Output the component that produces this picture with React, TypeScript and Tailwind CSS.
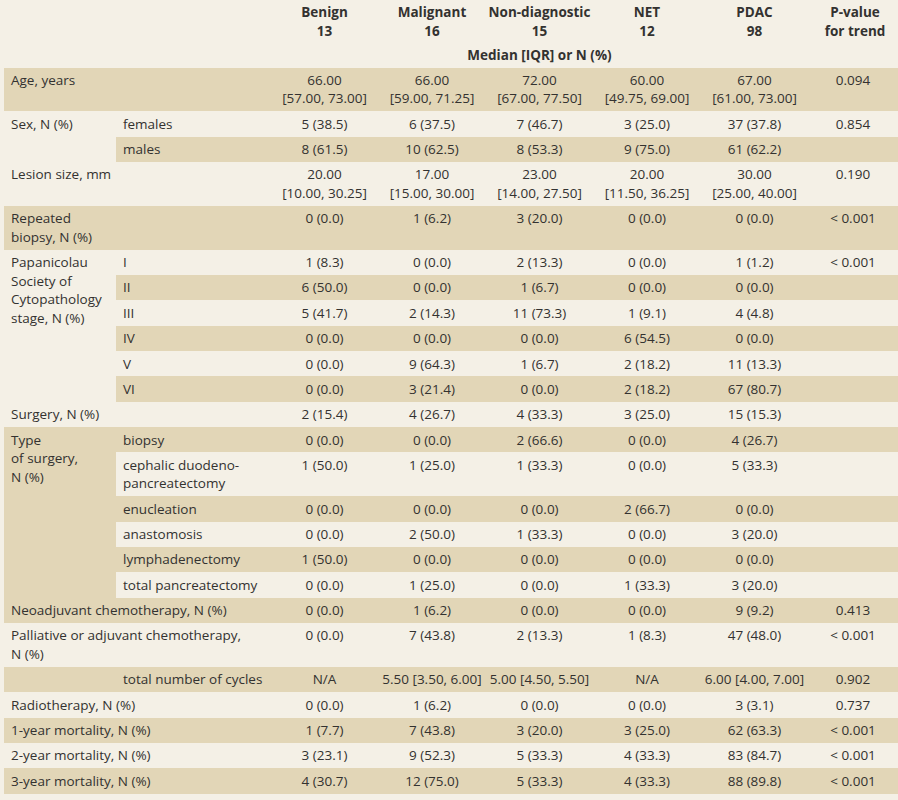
import type { ReactNode } from 'react';

const DARK = 'bg-[#e2d6b7]';
const LIGHT = 'bg-[#f4f0e6]';

type RowProps = {
  dark?: boolean;
  label?: ReactNode;
  rowSpan?: number;
  wide?: boolean;
  sub?: string;
  vals: string[];
  p?: string;
};

const Row = ({ dark, label, rowSpan, wide, sub, vals, p }: RowProps) => {
  const bg = dark ? DARK : LIGHT;
  return (
    <tr>
      {label !== undefined && (
        <td
          rowSpan={rowSpan}
          colSpan={wide ? 2 : 1}
          className={`${bg} pl-[7px] pr-1 text-left align-top whitespace-pre-line`}
        >
          {label}
        </td>
      )}
      {sub !== undefined && (
        <td className={`${bg} pl-[7px] text-left align-top whitespace-pre-line`}>{sub}</td>
      )}
      {vals.map((v, i) => (
        <td key={i} className={`${bg} text-center align-top whitespace-pre-line`}>
          {v}
        </td>
      ))}
      <td className={`${bg} text-center align-top`}>{p ?? ''}</td>
    </tr>
  );
};

const z = '0 (0.0)';

export default function App() {
  return (
    <div className="min-h-screen bg-[#f4f0e6] text-[#333230]" style={{ fontFamily: '"Open Sans", "Noto Sans", sans-serif' }}>
      <table className="ml-[4px] w-[894px] table-fixed border-collapse text-[13.5px] leading-[18.5px] [&_td]:py-[3.43px]">
        <colgroup>
          <col className="w-[112px]" />
          <col className="w-[155px]" />
          <col className="w-[107px]" />
          <col className="w-[108px]" />
          <col className="w-[107px]" />
          <col className="w-[108px]" />
          <col className="w-[107px]" />
          <col className="w-[90px]" />
        </colgroup>
        <thead className="font-bold">
          <tr>
            <th colSpan={2} />
            <th className="pt-[3px] pb-[2px] text-center align-top">Benign<br />13</th>
            <th className="pt-[3px] pb-[2px] text-center align-top">Malignant<br />16</th>
            <th className="pt-[3px] pb-[2px] text-center align-top">Non-diagnostic<br />15</th>
            <th className="pt-[3px] pb-[2px] text-center align-top">NET<br />12</th>
            <th className="pt-[3px] pb-[2px] text-center align-top">PDAC<br />98</th>
            <th className="pt-[3px] pb-[2px] pl-[4px] text-center align-top">P-value<br />for trend</th>
          </tr>
          <tr>
            <th colSpan={2} />
            <th colSpan={5} className="pt-[3.5px] pb-[3.5px] text-center">Median [IQR] or N (%)</th>
            <th />
          </tr>
        </thead>
        <tbody>
          <Row dark wide label="Age, years" vals={['66.00\n[57.00, 73.00]', '66.00\n[59.00, 71.25]', '72.00\n[67.00, 77.50]', '60.00\n[49.75, 69.00]', '67.00\n[61.00, 73.00]']} p="0.094" />
          <Row label="Sex, N (%)" rowSpan={2} sub="females" vals={['5 (38.5)', '6 (37.5)', '7 (46.7)', '3 (25.0)', '37 (37.8)']} p="0.854" />
          <Row dark sub="males" vals={['8 (61.5)', '10 (62.5)', '8 (53.3)', '9 (75.0)', '61 (62.2)']} />
          <Row wide label="Lesion size, mm" vals={['20.00\n[10.00, 30.25]', '17.00\n[15.00, 30.00]', '23.00\n[14.00, 27.50]', '20.00\n[11.50, 36.25]', '30.00\n[25.00, 40.00]']} p="0.190" />
          <Row dark label={'Repeated\nbiopsy, N (%)'} sub="" vals={[z, '1 (6.2)', '3 (20.0)', z, z]} p="< 0.001" />
          <Row label={'Papanicolau\nSociety of\nCytopathology\nstage, N (%)'} rowSpan={6} sub="I" vals={['1 (8.3)', z, '2 (13.3)', z, '1 (1.2)']} p="< 0.001" />
          <Row dark sub="II" vals={['6 (50.0)', z, '1 (6.7)', z, z]} />
          <Row sub="III" vals={['5 (41.7)', '2 (14.3)', '11 (73.3)', '1 (9.1)', '4 (4.8)']} />
          <Row dark sub="IV" vals={[z, z, z, '6 (54.5)', z]} />
          <Row sub="V" vals={[z, '9 (64.3)', '1 (6.7)', '2 (18.2)', '11 (13.3)']} />
          <Row dark sub="VI" vals={[z, '3 (21.4)', z, '2 (18.2)', '67 (80.7)']} />
          <Row wide label="Surgery, N (%)" vals={['2 (15.4)', '4 (26.7)', '4 (33.3)', '3 (25.0)', '15 (15.3)']} />
          <Row dark label={'Type\nof surgery,\nN (%)'} rowSpan={6} sub="biopsy" vals={[z, z, '2 (66.6)', z, '4 (26.7)']} />
          <Row sub={'cephalic duodeno-\npancreatectomy'} vals={['1 (50.0)', '1 (25.0)', '1 (33.3)', z, '5 (33.3)']} />
          <Row dark sub="enucleation" vals={[z, z, z, '2 (66.7)', z]} />
          <Row sub="anastomosis" vals={[z, '2 (50.0)', '1 (33.3)', z, '3 (20.0)']} />
          <Row dark sub="lymphadenectomy" vals={['1 (50.0)', z, z, z, z]} />
          <Row sub="total pancreatectomy" vals={[z, '1 (25.0)', z, '1 (33.3)', '3 (20.0)']} />
          <Row dark wide label="Neoadjuvant chemotherapy, N (%)" vals={[z, '1 (6.2)', z, z, '9 (9.2)']} p="0.413" />
          <Row wide label={'Palliative or adjuvant chemotherapy,\nN (%)'} vals={[z, '7 (43.8)', '2 (13.3)', '1 (8.3)', '47 (48.0)']} p="< 0.001" />
          <Row dark label="" sub="total number of cycles" vals={['N/A', '5.50 [3.50, 6.00]', '5.00 [4.50, 5.50]', 'N/A', '6.00 [4.00, 7.00]']} p="0.902" />
          <Row wide label="Radiotherapy, N (%)" vals={[z, '1 (6.2)', z, z, '3 (3.1)']} p="0.737" />
          <Row dark wide label="1-year mortality, N (%)" vals={['1 (7.7)', '7 (43.8)', '3 (20.0)', '3 (25.0)', '62 (63.3)']} p="< 0.001" />
          <Row wide label="2-year mortality, N (%)" vals={['3 (23.1)', '9 (52.3)', '5 (33.3)', '4 (33.3)', '83 (84.7)']} p="< 0.001" />
          <Row dark wide label="3-year mortality, N (%)" vals={['4 (30.7)', '12 (75.0)', '5 (33.3)', '4 (33.3)', '88 (89.8)']} p="< 0.001" />
        </tbody>
      </table>
    </div>
  );
}
